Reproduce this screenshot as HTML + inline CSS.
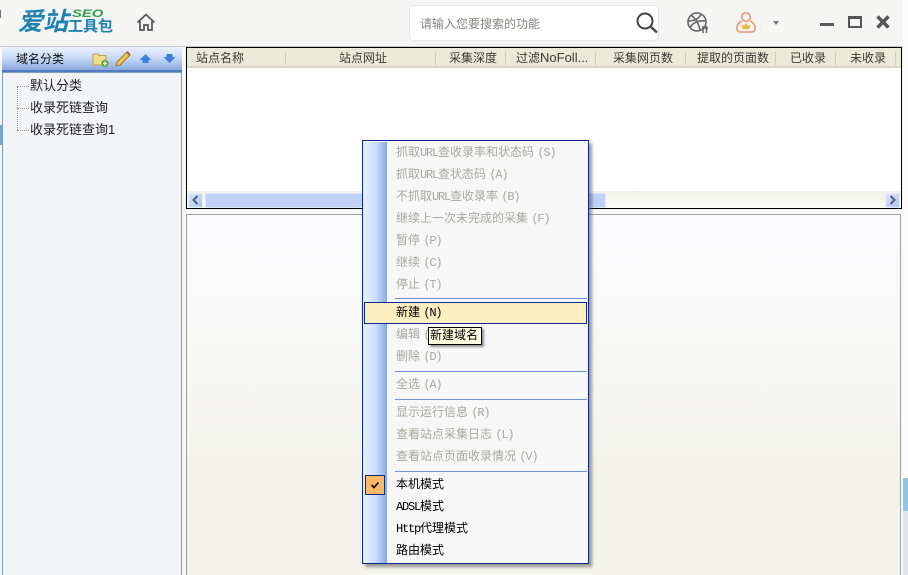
<!DOCTYPE html>
<html lang="zh"><head><meta charset="utf-8"><style>
html,body{margin:0;padding:0;width:908px;height:575px;overflow:hidden;background:#f8f8f6}
body{position:relative;font-family:"Liberation Sans","WenQuanYi Zen Hei","Noto Sans CJK SC",sans-serif;font-size:12px}
div,svg{position:absolute;box-sizing:border-box}
.t{white-space:nowrap;line-height:16px;height:16px}
.h{top:50px;color:#3b3b33;white-space:nowrap;line-height:16px}
.s{top:52px;width:1px;height:13px;background:#cfcdbc}
.m{left:396px;color:#a9a89e;white-space:nowrap;line-height:16px}
.l{font:12px/16px "Liberation Mono",monospace;letter-spacing:-1.2px}
.b{color:#000}
.sep{left:395px;width:192px;height:1px;background:#6d8fd6}
</style></head><body>
<div style="left:0;top:0;width:903px;height:47px;background:#f5f5f4;border-bottom:1px solid #c9c9c9"></div>
<div style="left:903px;top:0;width:5px;height:575px;background:#fcfcfc"></div>
<div style="left:903px;top:478px;width:5px;height:33px;background:#8cc6ea"></div>
<div style="left:903px;top:511px;width:5px;height:64px;background:#dbe6ee"></div>
<div style="left:0;top:10px;width:1px;height:8px;background:#777"></div>
<div style="left:0;top:125px;width:2px;height:20px;background:#6fa8d8"></div>

<!-- logo -->
<div class="t" style="left:18px;top:8px;width:54px;height:28px;font:italic bold 25px/28px 'Liberation Sans','Noto Sans CJK SC',sans-serif;color:#1f80b4">爱站</div>
<div class="t" style="left:72px;top:9px;font:italic bold 11px/11px 'Liberation Sans',sans-serif;color:#2f9f48;height:11px;transform:scaleX(1.35);transform-origin:left top">SEO</div>
<div class="t" style="left:68px;top:19px;font:bold 15px/16px 'Liberation Sans','Noto Sans CJK SC',sans-serif;color:#1f80b4">工具包</div>
<!-- home -->
<svg style="left:136px;top:13px" width="20" height="19" viewBox="0 0 20 19" fill="none" stroke="#555" stroke-width="1.7"><path d="M1.5 9.5L10 1.5l8.5 8M4 8v9h4v-5h4v5h4V8"/></svg>

<!-- search -->
<div style="left:409px;top:5px;width:250px;height:36px;background:#fff;border:1px solid #e6e6e6;border-radius:5px"></div>
<div class="t" style="left:420px;top:16px;color:#85857f;font-size:12px">请输入您要搜索的功能</div>
<svg style="left:635px;top:11px" width="24" height="24" viewBox="0 0 24 24" fill="none" stroke="#444" stroke-width="2"><circle cx="10" cy="10" r="7.5"/><path d="M15.5 15.5L22 21.5" stroke-width="2.5"/></svg>
<!-- icons -->
<svg style="left:686px;top:11px" width="24" height="24" viewBox="0 0 24 24" fill="none" stroke="#666" stroke-width="1.6"><circle cx="11" cy="11" r="9"/><path d="M5 4c4 3 8 8 9 16M2.5 10c5 0 10-2 13-7M4 17c2-5 8-8 16-7"/><path d="M17 15v7M20.5 15v7M16 17h6" stroke-width="1.5"/></svg>
<svg style="left:735px;top:11px" width="22" height="22" viewBox="0 0 22 22" fill="none" stroke="#ee9f7d" stroke-width="1.8"><circle cx="11" cy="6" r="4.2"/><path d="M7 10c-4 2-5.5 5-5 8 0 2 2 3 4 3h10c2 0 4-1 4-3 .5-3-1-6-5-8"/><path d="M6.500 13l2.300 2 2.200-3 2.200 3 2.300-2-1 5H7.500z" fill="#f0b840" stroke="none"/></svg>
<div style="left:773px;top:21px;width:0;height:0;border-left:3.500px solid transparent;border-right:3.500px solid transparent;border-top:4px solid #777"></div>
<div style="left:820px;top:23px;width:14px;height:3px;background:#5c5c5c"></div>
<div style="left:848px;top:16px;width:14px;height:12px;border:2px solid #555;border-top-width:3px"></div>
<svg style="left:876px;top:15px" width="14" height="14" viewBox="0 0 14 14" stroke="#555" stroke-width="3.400"><path d="M1.500 1.500l11 11M12.500 1.500l-11 11"/></svg>

<!-- left panel -->
<div style="left:2px;top:47px;width:180px;height:25px;background:linear-gradient(#eaf2fe,#c5d9f7 50%,#8aa8dc);border-radius:3px 3px 0 0;border-bottom:2px solid #4f7cc0"></div>
<div class="t" style="left:16px;top:51px;color:#111">域名分类</div>
<svg style="left:92px;top:51px" width="18" height="17" viewBox="0 0 18 17"><path d="M1 3h5l1 1.500h7V14H1z" fill="#f4dd90" stroke="#c0a050"/><circle cx="13" cy="12.500" r="3.700" fill="#5aa83e"/><path d="M11 12.500h4M13 10.500v4" stroke="#fff" stroke-width="1.200"/></svg>
<svg style="left:114px;top:50px" width="18" height="18" viewBox="0 0 18 18"><path d="M2 16l1-4L13 2l3 3L6 15z" fill="#f0c850" stroke="#a07830"/><path d="M13 2l3 3" stroke="#c05040" stroke-width="2"/></svg>
<svg style="left:139px;top:53px" width="13" height="11" viewBox="0 0 13 11"><path d="M6.500 1L12.500 7H9.500V10H3.500V7H.5z" fill="#3f7fe0"/></svg>
<svg style="left:163px;top:53px" width="13" height="11" viewBox="0 0 13 11"><path d="M6.500 10L12.500 4H9.500V1H3.500V4H.5z" fill="#3f7fe0"/></svg>
<div style="left:2px;top:72px;width:180px;height:503px;background:#f2f4f8;border:1px solid #7f9db9;border-bottom:0"></div>
<div style="left:17px;top:86px;width:1px;height:44px;border-left:1px dotted #999"></div>
<div style="left:17px;top:86px;width:12px;height:1px;border-top:1px dotted #999"></div>
<div style="left:17px;top:108px;width:12px;height:1px;border-top:1px dotted #999"></div>
<div style="left:17px;top:130px;width:12px;height:1px;border-top:1px dotted #999"></div>
<div class="t" style="left:30px;top:78px;color:#222;font-size:13px">默认分类</div>
<div class="t" style="left:30px;top:100px;color:#222;font-size:13px">收录死链查询</div>
<div class="t" style="left:30px;top:122px;color:#222;font-size:13px">收录死链查询1</div>

<!-- grid -->
<div style="left:186px;top:47px;width:716px;height:162px;background:#fff;border:1px solid #000"></div>
<div style="left:187px;top:48px;width:714px;height:20px;background:#ebe9d8;border-bottom:2px solid #d6d3c2"></div>
<div class="h" style="left:196px">站点名称</div>
<div class="h" style="left:339px">站点网址</div>
<div class="h" style="left:449px">采集深度</div>
<div class="h" style="left:516px">过滤<span style="font-size:13px">NoFoll...</span></div>
<div class="h" style="left:613px">采集网页数</div>
<div class="h" style="left:697px">提取的页面数</div>
<div class="h" style="left:790px">已收录</div>
<div class="h" style="left:850px">未收录</div>
<div class="s" style="left:285px"></div><div class="s" style="left:435px"></div><div class="s" style="left:505px"></div><div class="s" style="left:595px"></div><div class="s" style="left:685px"></div><div class="s" style="left:775px"></div><div class="s" style="left:835px"></div><div class="s" style="left:895px"></div>
<!-- scrollbar -->
<div style="left:187px;top:191px;width:714px;height:17px;background:linear-gradient(#f1f0e8,#fbfbf8)"></div>
<div style="left:188px;top:193px;width:15px;height:15px;background:linear-gradient(135deg,#dbe6fb,#aec4f0);border:1px solid #e8eefb;border-radius:2px"></div>
<svg style="left:191px;top:195px" width="9" height="10" viewBox="0 0 9 10" fill="none" stroke="#4d6185" stroke-width="2"><path d="M6.500 1L2.500 5l4 4"/></svg>
<div style="left:205px;top:193px;width:401px;height:15px;background:#bfd1f6;border:1px solid #dce6fb;border-radius:2px"></div>
<div style="left:885px;top:193px;width:15px;height:15px;background:linear-gradient(135deg,#dbe6fb,#aec4f0);border:1px solid #e8eefb;border-radius:2px"></div>
<svg style="left:888px;top:195px" width="9" height="10" viewBox="0 0 9 10" fill="none" stroke="#4d6185" stroke-width="2"><path d="M2.500 1l4 4-4 4"/></svg>

<!-- bottom panel -->
<div style="left:186px;top:214px;width:715px;height:361px;background:linear-gradient(#fcfcff 0,#f9f9f9 90px,#f3f2ec 260px,#f3f2ec);border:1px solid #9aa3a0;border-bottom:0"></div>

<!-- menu -->
<div style="left:362px;top:140px;width:227px;height:424px;background:#f7f7f7;border:1px solid #0a2a8c;box-shadow:3px 3px 3px rgba(90,90,90,.6)"></div>
<div style="left:363px;top:142px;width:24px;height:421px;background:linear-gradient(90deg,#e3efff,#cfe0fa 50%,#86a8e0)"></div>

<div class="m" style="top:144px">抓取<span class="l">URL</span>查收录率和状态码 <span class="l">(S)</span></div>
<div class="m" style="top:166px">抓取<span class="l">URL</span>查状态码 <span class="l">(A)</span></div>
<div class="m" style="top:188px">不抓取<span class="l">URL</span>查收录率 <span class="l">(B)</span></div>
<div class="m" style="top:210px">继续上一次未完成的采集 <span class="l">(F)</span></div>
<div class="m" style="top:232px">暂停 <span class="l">(P)</span></div>
<div class="m" style="top:254px">继续 <span class="l">(C)</span></div>
<div class="m" style="top:276px">停止 <span class="l">(T)</span></div>
<div class="sep" style="top:298px"></div>
<div style="left:364px;top:302px;width:223px;height:22px;background:#ffeec2;border:1px solid #0a2a8c"></div>
<div class="m b" style="top:304px">新建 <span class="l">(N)</span></div>
<div class="m" style="top:326px">编辑 <span class="l">(</span></div>
<div class="m" style="top:348px">删除 <span class="l">(D)</span></div>
<div class="sep" style="top:371px"></div>
<div class="m" style="top:376px">全选 <span class="l">(A)</span></div>
<div class="sep" style="top:399px"></div>
<div class="m" style="top:404px">显示运行信息 <span class="l">(R)</span></div>
<div class="m" style="top:426px">查看站点采集日志 <span class="l">(L)</span></div>
<div class="m" style="top:448px">查看站点页面收录情况 <span class="l">(V)</span></div>
<div class="sep" style="top:471px"></div>
<div style="left:365px;top:475px;width:20px;height:20px;background:#ffb866;border:1px solid #0a2a8c"></div>
<svg style="left:369px;top:479px" width="12" height="12" viewBox="0 0 12 12" fill="none" stroke="#111" stroke-width="1.800"><path d="M2.500 6l2.500 2.500L9.500 3.500"/></svg>
<div class="m b" style="top:476px">本机模式</div>
<div class="m b" style="top:498px"><span class="l">ADSL</span>模式</div>
<div class="m b" style="top:520px"><span class="l">Http</span>代理模式</div>
<div class="m b" style="top:542px">路由模式</div>

<!-- tooltip -->
<div style="left:428px;top:327px;width:54px;height:18px;background:#ffffe1;border:1px solid #000;box-shadow:2px 2px 2px rgba(80,80,80,.6)"></div>
<div class="t" style="left:430px;top:327px;color:#000">新建域名</div>
</body></html>
